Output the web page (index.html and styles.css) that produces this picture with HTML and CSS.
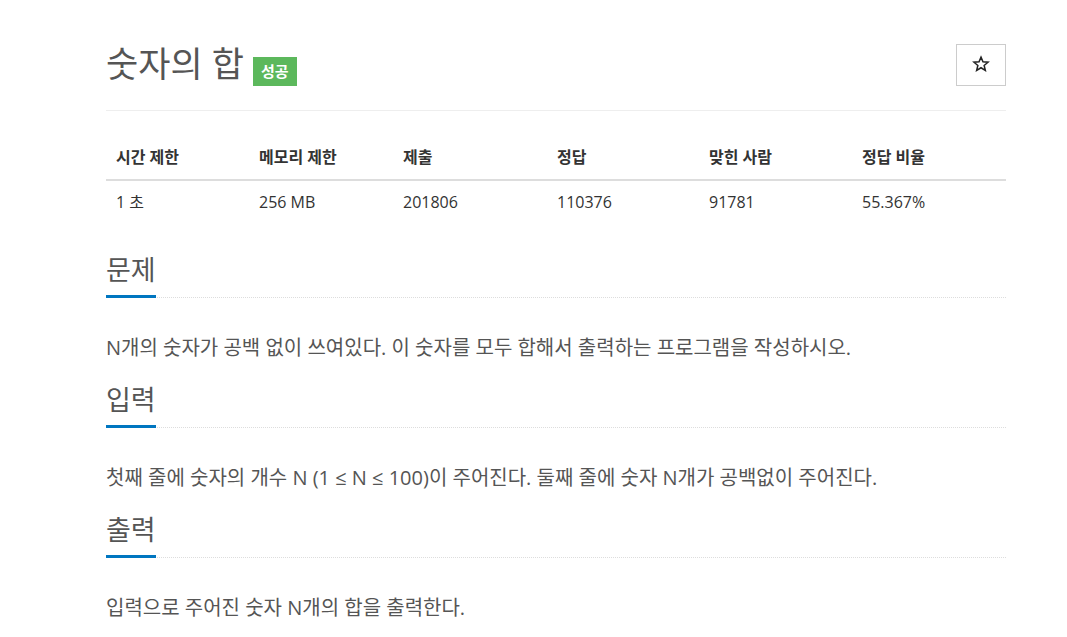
FILE: index.html
```html
<!DOCTYPE html>
<html lang="ko">
<head>
<meta charset="utf-8">
<title>숫자의 합</title>
<link rel="stylesheet" href="styles.css">
</head>
<body>
<div class="container">
  <div class="page-header">
    <h1 class="title">숫자의 합 <span class="badge">성공</span></h1>
    <button class="star-btn" type="button" aria-label="즐겨찾기">
      <svg class="star" width="18" height="18" viewBox="0 0 24 24"><path d="M12 2.8l2.6 6.3 6.8.5-5.2 4.4 1.6 6.6L12 17l-5.8 3.6 1.6-6.6-5.2-4.4 6.8-.5z" fill="none" stroke="#222" stroke-width="2" stroke-linejoin="miter"/></svg>
    </button>
  </div>

  <table class="info">
    <thead>
      <tr>
        <th class="c1">시간 제한</th>
        <th class="c2">메모리 제한</th>
        <th class="c3">제출</th>
        <th class="c4">정답</th>
        <th class="c5">맞힌 사람</th>
        <th class="c6">정답 비율</th>
      </tr>
    </thead>
    <tbody>
      <tr>
        <td>1 초</td>
        <td>256 MB</td>
        <td>201806</td>
        <td>110376</td>
        <td>91781</td>
        <td>55.367%</td>
      </tr>
    </tbody>
  </table>

  <section class="section">
    <div class="headline"><h2>문제</h2></div>
    <p class="text">N개의 숫자가 공백 없이 쓰여있다. 이 숫자를 모두 합해서 출력하는 프로그램을 작성하시오.</p>
  </section>

  <section class="section">
    <div class="headline"><h2>입력</h2></div>
    <p class="text">첫째 줄에 숫자의 개수 N (1 ≤ N ≤ 100)이 주어진다. 둘째 줄에 숫자 N개가 공백없이 주어진다.</p>
  </section>

  <section class="section">
    <div class="headline"><h2>출력</h2></div>
    <p class="text">입력으로 주어진 숫자 N개의 합을 출력한다.</p>
  </section>
</div>
</body>
</html>
```

FILE: styles.css
```css
html, body {
  margin: 0;
  padding: 0;
  background: #fff;
}
body {
  font-family: "Open Sans", "Noto Sans CJK KR", sans-serif;
  color: #333;
}
.container {
  width: 900px;
  margin-left: 106px;
  padding-top: 40px;
}
.page-header {
  display: flex;
  justify-content: space-between;
  align-items: flex-start;
  border-bottom: 1px solid #eee;
  padding-bottom: 22px;
}
.title {
  margin: 0;
  font-size: 35px;
  font-weight: 400;
  line-height: 48px;
  color: #555;
  display: flex;
  align-items: center;
  gap: 9px;
}
.badge {
  display: inline-block;
  background: #5cb85c;
  color: #fff;
  font-size: 15px;
  font-weight: 700;
  line-height: 29px;
  padding: 0 8px;
  margin-top: 15px;
}
.star-btn {
  width: 50px;
  height: 42px;
  margin-top: 4px;
  border: 1px solid #ccc;
  background: #fff;
  padding: 0;
  display: flex;
  align-items: center;
  justify-content: center;
}
.star {
  display: block;
  margin-top: -2px;
}
.info {
  width: 900px;
  border-collapse: collapse;
  margin-top: 24px;
  font-size: 16px;
}
.info th, .info td {
  text-align: left;
  padding: 11px 10px;
  line-height: 21px;
}
.info th {
  font-weight: 700;
  border-bottom: 2px solid #ddd;
  padding-top: 12px;
}
.c1 { width: 123px; }
.c2 { width: 124px; }
.c3 { width: 134px; }
.c4 { width: 132px; }
.c5 { width: 133px; }
.section {
  margin-top: 18px;
}
.section:first-of-type {
  margin-top: 27px;
}
.headline {
  border-bottom: 1px dotted #ddd;
  display: flex;
}
.headline h2 {
  margin: 0 0 -1px 0;
  font-size: 27px;
  font-weight: 400;
  color: #555;
  line-height: 38px;
  padding-bottom: 6px;
  border-bottom: 3px solid #0076c0;
}
.text {
  margin: 35px 0 0 0;
  font-size: 20px;
  line-height: 30px;
  color: #555;
}
```
